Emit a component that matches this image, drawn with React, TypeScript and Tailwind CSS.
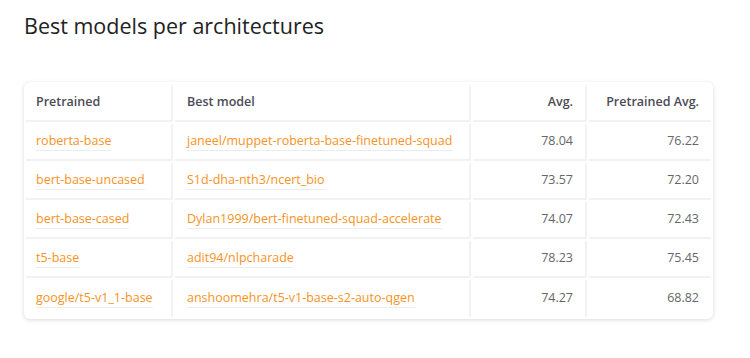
const rows = [
  { pretrained: 'roberta-base', best: 'janeel/muppet-roberta-base-finetuned-squad', avg: '78.04', pavg: '76.22' },
  { pretrained: 'bert-base-uncased', best: 'S1d-dha-nth3/ncert_bio', avg: '73.57', pavg: '72.20' },
  { pretrained: 'bert-base-cased', best: 'Dylan1999/bert-finetuned-squad-accelerate', avg: '74.07', pavg: '72.43' },
  { pretrained: 't5-base', best: 'adit94/nlpcharade', avg: '78.23', pavg: '75.45' },
  { pretrained: 'google/t5-v1_1-base', best: 'anshoomehra/t5-v1-base-s2-auto-qgen', avg: '74.27', pavg: '68.82' },
];

function Link({ children }: { children: string }) {
  return (
    <a href="#" className="text-[#f7931e] border-b border-[#ececec] pb-px">
      {children}
    </a>
  );
}

export default function App() {
  return (
    <div className="bg-white w-[750px] h-[358px] px-6 pt-[11px] text-[12.5px]" style={{ fontFamily: '"Open Sans", "Noto Sans", sans-serif' }}>
      <h2 className="text-[21.5px] leading-[30px] text-[#222] font-normal">Best models per architectures</h2>

      <div className="mt-[41px] w-[689px] bg-white rounded-md shadow-[0_1px_4px_rgba(0,0,0,0.15)] pt-px">
        <table className="w-full border-separate border-spacing-[2px] whitespace-nowrap">
          <thead>
            <tr className="h-[37px]">
              <th className="w-[147px] text-left font-semibold text-[#4b4b55] px-[10px] border-b-2 border-r-2 border-[#f2f2f2]">Pretrained</th>
              <th className="w-[296px] text-left font-semibold text-[#4b4b55] px-3 border-b-2 border-r-2 border-[#f2f2f2]">Best model</th>
              <th className="w-[114px] text-right font-semibold text-[#4b4b55] px-3 border-b-2 border-r-2 border-[#f2f2f2]">Avg.</th>
              <th className="text-right font-semibold text-[#4b4b55] px-3 border-b-2 border-[#f2f2f2]">Pretrained Avg.</th>
            </tr>
          </thead>
          <tbody>
            {rows.map((r, i) => {
              const last = i === rows.length - 1;
              const b = last ? '' : 'border-b-2 border-[#f2f2f2]';
              return (
                <tr key={r.pretrained} className="h-[37px]">
                  <td className={`px-[10px] border-r-2 border-[#f2f2f2] ${b}`}><Link>{r.pretrained}</Link></td>
                  <td className={`px-3 border-r-2 border-[#f2f2f2] ${b}`}><Link>{r.best}</Link></td>
                  <td className={`px-3 text-right text-[#666] border-r-2 border-[#f2f2f2] ${b}`}>{r.avg}</td>
                  <td className={`px-3 text-right text-[#666] ${b}`}>{r.pavg}</td>
                </tr>
              );
            })}
          </tbody>
        </table>
      </div>
    </div>
  );
}
